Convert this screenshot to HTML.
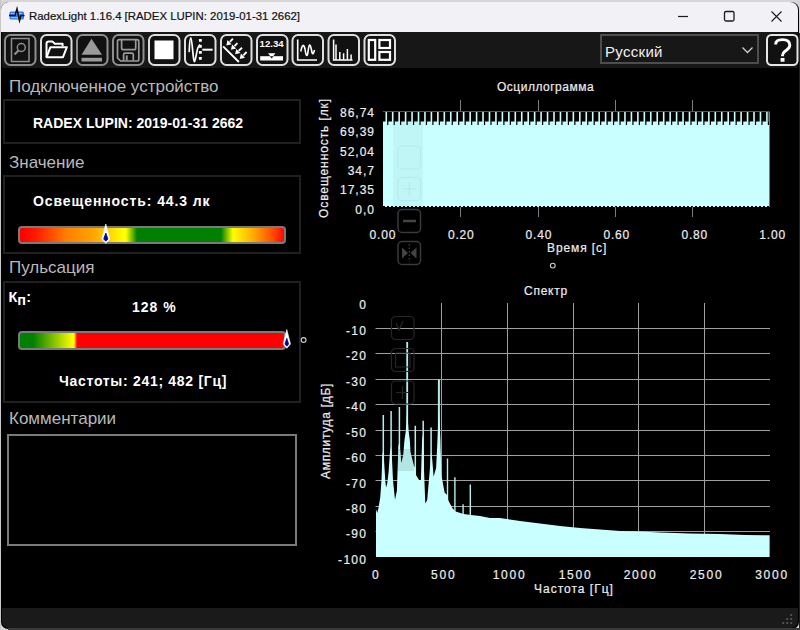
<!DOCTYPE html>
<html><head><meta charset="utf-8">
<style>
html,body{margin:0;padding:0;}
body{width:800px;height:630px;position:relative;overflow:hidden;background:#d6d6d6;font-family:"Liberation Sans",sans-serif;}
.a{position:absolute;}
#win{position:absolute;left:1px;top:2px;width:798px;height:627px;background:#000;border-radius:8px 8px 7px 7px;overflow:hidden;}
#title{position:absolute;left:1px;top:2px;width:797px;height:30px;background:#f1f1f6;border-radius:8px 8px 0 0;}
#tb{position:absolute;left:2px;top:32px;width:796px;height:36px;background:#171717;}
#status{position:absolute;left:2px;top:608px;width:796px;height:20px;background:#1a1a1a;border-radius:0 0 7px 7px;}
.t{position:absolute;white-space:nowrap;line-height:1;}
.hdr{color:#b9b9b9;font-size:17px;}
.box{position:absolute;border:2px solid #202020;box-sizing:border-box;}
.bold{font-weight:bold;color:#fff;font-size:14px;}
.ch{color:#ececec;font-size:12px;-webkit-text-stroke:0.2px #ececec;}
svg{position:absolute;left:0;top:0;}
</style></head><body>
<div class="a" style="left:0;top:0;width:800px;height:2px;background:#d6d6d6;"></div>
<div class="a" style="left:0;top:0;width:1px;height:630px;background:#c8c8c8;"></div>
<div id="win"></div>
<div id="title"></div>
<div id="tb"></div>
<div id="status"></div>
<div class="a" style="left:799px;top:33px;width:1px;height:597px;background:#222;"></div>
<div class="a" style="left:8px;top:628px;width:792px;height:2px;background:#3a3a3a;"></div>

<svg width="800" height="630" style="left:0;top:0"><g fill="#4e4e4e"><rect x="790.2" y="614" width="2" height="2"/><rect x="786.2" y="618" width="2" height="2"/><rect x="790.2" y="618" width="2" height="2"/><rect x="782.1" y="622" width="2" height="2"/><rect x="786.2" y="622" width="2" height="2"/><rect x="790.2" y="622" width="2" height="2"/></g></svg>
<!-- title bar -->
<div class="t" style="left:29px;top:11px;font-size:11.4px;color:#111;-webkit-text-stroke:0.2px #111;">RadexLight 1.16.4 [RADEX LUPIN: 2019-01-31 2662]</div>
<svg width="800" height="70" style="left:0;top:0">
  <rect x="9.5" y="11.5" width="14.5" height="8" rx="1.5" fill="#2f7df6"/>
  <rect x="11" y="13" width="11" height="1.2" fill="#8fc0ff"/>
  <rect x="11" y="17" width="11" height="1.2" fill="#8fc0ff"/>
  <path d="M9 15.5 H15 L17 9 L19.5 20.5 L21 15.5 H24.5" fill="none" stroke="#111" stroke-width="1.6"/>
  <!-- caption buttons -->
  <path d="M678 16.5 H688" stroke="#1c1c1c" stroke-width="1.2"/>
  <rect x="724.5" y="11.5" width="9.5" height="9.5" rx="1.5" fill="none" stroke="#1c1c1c" stroke-width="1.3"/>
  <path d="M771.5 11.5 L781.5 21.5 M781.5 11.5 L771.5 21.5" stroke="#1c1c1c" stroke-width="1.1"/>
</svg>

<!-- toolbar icons -->
<svg width="400" height="70" style="left:0;top:0" fill="none">
  <g stroke-width="2">
    <rect x="5" y="35" width="30.5" height="30" rx="5.5" stroke="#8e8e8e" fill="#111"/>
    <rect x="41" y="35" width="30.5" height="30" rx="5.5" stroke="#dedede" fill="#111"/>
    <rect x="77" y="35" width="30.5" height="30" rx="5.5" stroke="#8e8e8e" fill="#111"/>
    <rect x="113" y="35" width="30.5" height="30" rx="5.5" stroke="#8e8e8e" fill="#111"/>
    <rect x="149" y="35" width="30.5" height="30" rx="5.5" stroke="#dedede" fill="#111"/>
    <rect x="185" y="35" width="30.5" height="30" rx="5.5" stroke="#dedede" fill="#111"/>
    <rect x="221" y="35" width="30.5" height="30" rx="5.5" stroke="#dedede" fill="#111"/>
    <rect x="257" y="35" width="30.5" height="30" rx="5.5" stroke="#dedede" fill="#111"/>
    <rect x="292.5" y="35" width="30.5" height="30" rx="5.5" stroke="#dedede" fill="#111"/>
    <rect x="328.5" y="35" width="30.5" height="30" rx="5.5" stroke="#dedede" fill="#111"/>
    <rect x="364.5" y="35" width="30.5" height="30" rx="5.5" stroke="#dedede" fill="#111"/>
  </g>
  <!-- 1 search doc -->
  <g stroke="#8e8e8e" stroke-width="1.5">
    <rect x="11.5" y="38.5" width="17.5" height="23"/>
    <circle cx="21.3" cy="47.5" r="4"/>
    <path d="M18.5 50.5 L14.5 54.5" stroke-width="2.2"/>
  </g>
  <!-- 2 folder -->
  <path d="M46.5 57 V43.8 Q46.5 41.6 48.8 41.6 H52.6 L54.8 43.8 H62.6 V46.2" stroke="#fff" stroke-width="2" stroke-linejoin="round"/>
  <path d="M46.6 57.2 L50.4 47.2 H66.9 L63 57.2 Z" stroke="#fff" stroke-width="2" stroke-linejoin="round"/>
  <!-- 3 eject -->
  <path d="M91.5 38.7 L102 54.8 H81.5 Z" fill="#9a9a9a"/>
  <rect x="81.5" y="57.8" width="20.5" height="3.7" fill="#9a9a9a"/>
  <!-- 4 floppy -->
  <g stroke="#9a9a9a" stroke-width="1.7">
    <path d="M119.3 39.6 H136.9 Q138.8 39.6 138.8 41.5 V59.2 Q138.8 61 137 61 H120.6 L117.5 57.9 V41.5 Q117.5 39.6 119.3 39.6 Z"/>
    <path d="M121.6 39.6 V48 Q121.6 49.7 123.2 49.7 H134.1 Q135.7 49.7 135.7 48 V39.6"/>
    <path d="M123.6 61 V54.6 Q123.6 53.2 125 53.2 H131.8 Q133.3 53.2 133.3 54.6 V61"/>
  </g>
  <rect x="125.8" y="55.4" width="1.9" height="5" fill="#9a9a9a"/>
  <!-- 5 stop -->
  <rect x="154.5" y="40.5" width="19" height="18.7" fill="#fff"/>
  <!-- 6 wave dots -->
  <path d="M189.2 51.5 C189.6 41 190 37.8 190.8 37.8 C192.2 38 193 61.8 194.5 61.6 C195.8 61.3 196.6 46.5 199.6 45" stroke="#fff" stroke-width="1.7" stroke-linecap="round"/>
  <g fill="#fff"><rect x="198.9" y="38.9" width="2.9" height="2.9" rx="0.5"/><rect x="198.9" y="44.9" width="2.9" height="2.9" rx="0.5"/><rect x="198.9" y="50.9" width="2.9" height="2.9" rx="0.5"/><rect x="198.9" y="56.9" width="2.9" height="2.9" rx="0.5"/></g>
  <path d="M202.3 49.7 H212.6" stroke="#fff" stroke-width="2"/>
  <!-- 7 lux -->
  <g stroke="#fff" stroke-width="1.9">
    <path d="M223.1 46.3 L238.9 62"/>
    <path d="M232.9 38.6 L229.9 41.8 M237.4 43.1 L234.5 46.1 M242.0 47.7 L238.7 50.7 M246.6 52.0 L243.3 55.3"/>
  </g>
  <path d="M226.3 45.4 L231.6 44.2 L227.5 40.1 Z M230.9 49.7 L236.2 48.5 L232.1 44.4 Z M235.1 54.3 L240.4 53.1 L236.3 49.0 Z M239.7 58.9 L245.0 57.7 L240.9 53.6 Z" fill="#fff"/>
  <!-- 8 12.34 -->
  <text x="271.6" y="47" fill="#fff" font-size="9.6" font-weight="bold" text-anchor="middle" font-family="Liberation Sans">12.34</text>
  <rect x="260.2" y="56.2" width="22.8" height="4.3" fill="#fff"/>
  <path d="M268 53.3 H275.5 L271.7 58 Z" fill="#fff"/>
  <path d="M269.8 56.2 H273.6 L271.7 58.6 Z" fill="#111"/>
  <!-- 9 wave chart -->
  <path d="M297.7 39.5 V60 H317" stroke="#fff" stroke-width="1.6"/>
  <path d="M300.8 51.5 C302 45 303.5 43 305 49 C306 56 307 58 308 52 C309 43 310 43 311.5 50 C312.5 56 313.5 54 314.5 50" stroke="#fff" stroke-width="1.6"/>
  <!-- 10 spectrum bars -->
  <g stroke="#fff" stroke-width="1.5">
    <path d="M333.6 39.5 V60 H352.5"/>
    <path d="M336 44.6 V60 M339.8 51.9 V60 M343.6 53.3 V60 M347.4 49 V60 M351.1 54.6 V60"/>
  </g>
  <!-- 11 layout -->
  <g stroke="#fff" stroke-width="2.2">
    <rect x="368.8" y="40" width="6.4" height="19.8"/>
    <rect x="379.4" y="40" width="10.6" height="8"/>
    <rect x="379.4" y="52" width="10.6" height="7.8"/>
  </g>
</svg>

<!-- language dropdown -->
<div class="a" style="left:600px;top:34px;width:159px;height:30px;background:#171717;border:2px solid #4d4d4d;box-sizing:border-box;"></div>
<div class="t" style="left:605px;top:44px;font-size:15px;letter-spacing:0.3px;color:#f0f0f0;">Русский</div>
<svg width="800" height="70" style="left:0;top:0" fill="none">
  <path d="M742.5 47.5 L747.5 52.5 L752.5 47.5" stroke="#cfcfcf" stroke-width="1.3"/>
  <rect x="767" y="35" width="30.5" height="30" rx="4.5" stroke="#e6e6e6" stroke-width="2" fill="#111"/>
  <path d="M775.6 44.5 C775.6 40.8 778.5 39.6 782.5 39.6 C786.8 39.6 789.8 41.6 789.8 45.3 C789.8 48.6 787.2 49.8 785 51.3 C783.3 52.5 782.5 53.5 782.5 55.5 V56.2" stroke="#fff" stroke-width="2.9"/>
  <rect x="780.6" y="58" width="3.9" height="3.7" fill="#fff"/>
</svg>

<!-- left panel -->
<div class="t hdr" style="left:9px;top:78px;">Подключенное устройство</div>
<div class="box" style="left:3px;top:99px;width:298px;height:45px;"></div>
<div class="t bold" style="left:33px;top:116px;">RADEX LUPIN: 2019-01-31 2662</div>

<div class="t hdr" style="left:9px;top:154px;">Значение</div>
<div class="box" style="left:3px;top:175px;width:298px;height:79px;"></div>
<div class="t bold" style="left:33px;top:193.5px;letter-spacing:0.9px;">Освещенность: 44.3 лк</div>

<div class="t hdr" style="left:9px;top:259px;">Пульсация</div>
<div class="box" style="left:3px;top:281px;width:298px;height:122px;"></div>
<div class="t bold" style="left:8.5px;top:290px;font-size:14.5px;">К<span style="position:relative;top:3px;">п</span>:</div>
<div class="t bold" style="left:132px;top:299.5px;letter-spacing:1px;">128 %</div>
<div class="t bold" style="left:59px;top:374px;letter-spacing:0.7px;">Частоты: 241; 482 [Гц]</div>

<div class="t hdr" style="left:9px;top:410px;">Комментарии</div>
<div class="a" style="left:7px;top:434px;width:289.5px;height:112px;border:2px solid #7a7a7a;box-sizing:border-box;"></div>

<!-- bars -->
<div class="a" style="left:18px;top:225.5px;width:268px;height:18px;border:2px solid #7a7a7a;border-radius:4px;box-sizing:border-box;background:linear-gradient(90deg,#ff0000 2px,#ff1c00 16px,#ff8000 47px,#ffa000 71px,#ffc800 86px,#ffff00 103px,#ffff00 106px,#008000 117px,#008000 201px,#ffff00 213px,#ffb000 232px,#ff5000 252px,#ff0000 265px);"></div>
<div class="a" style="left:18px;top:331px;width:268px;height:18.5px;border:2px solid #7a7a7a;border-radius:4px;box-sizing:border-box;background:linear-gradient(90deg,#008000 13px,#ffff00 53px,#ffff00 54px,#ff0000 57px,#ff0000 100%);"></div>
<svg width="320" height="360" style="left:0;top:0">
  <path d="M105.8 224 L109.8 239 L105.8 243.3 L101.8 239 Z" fill="#fff" stroke="#fff" stroke-width="0.6" stroke-linejoin="round"/>
  <path d="M105.8 233 L107.9 239 L105.8 241.2 L103.7 239 Z" fill="#000090" stroke="#000090" stroke-width="0.8" stroke-linejoin="round"/>
  <path d="M286.8 329.5 L290.5 344 L286.8 348.3 L283.1 344 Z" fill="#fff" stroke="#fff" stroke-width="0.6" stroke-linejoin="round"/>
  <path d="M286.8 338.3 L288.6 344 L286.8 346.2 L285 344 Z" fill="#000090" stroke="#000090" stroke-width="0.8" stroke-linejoin="round"/>
  <circle cx="303.6" cy="340" r="2.4" fill="none" stroke="#cfcfcf" stroke-width="1.1"/>
</svg>

<!-- CHARTS -->
<svg width="800" height="630" style="left:0;top:0" fill="none">
  <path d="M460.5 100V217 M538.5 100V217 M615.5 100V217 M692.5 100V217" stroke="#7d7d7d" stroke-width="1"/>
  <rect x="383" y="112" width="386.5" height="95" fill="#c9ffff"/>
  <path d="M383 112h2.5v9.5h-2.5z M387.05 112h4.85v9.5h-4.85z M387.15 121.5h1.2v3.5h-1.2z M393.50 112h4.85v9.5h-4.85z M393.60 121.5h1.2v3.5h-1.2z M399.95 112h4.85v9.5h-4.85z M400.05 121.5h1.2v3.5h-1.2z M406.41 112h4.85v9.5h-4.85z M406.51 121.5h1.2v3.5h-1.2z M412.86 112h4.85v9.5h-4.85z M412.96 121.5h1.2v3.5h-1.2z M419.31 112h4.85v9.5h-4.85z M419.41 121.5h1.2v3.5h-1.2z M425.76 112h4.85v9.5h-4.85z M425.86 121.5h1.2v3.5h-1.2z M432.21 112h4.85v9.5h-4.85z M432.31 121.5h1.2v3.5h-1.2z M438.67 112h4.85v9.5h-4.85z M438.77 121.5h1.2v3.5h-1.2z M445.12 112h4.85v9.5h-4.85z M445.22 121.5h1.2v3.5h-1.2z M451.57 112h4.85v9.5h-4.85z M451.67 121.5h1.2v3.5h-1.2z M458.02 112h4.85v9.5h-4.85z M458.12 121.5h1.2v3.5h-1.2z M464.47 112h4.85v9.5h-4.85z M464.57 121.5h1.2v3.5h-1.2z M470.93 112h4.85v9.5h-4.85z M471.03 121.5h1.2v3.5h-1.2z M477.38 112h4.85v9.5h-4.85z M477.48 121.5h1.2v3.5h-1.2z M483.83 112h4.85v9.5h-4.85z M483.93 121.5h1.2v3.5h-1.2z M490.28 112h4.85v9.5h-4.85z M490.38 121.5h1.2v3.5h-1.2z M496.73 112h4.85v9.5h-4.85z M496.83 121.5h1.2v3.5h-1.2z M503.19 112h4.85v9.5h-4.85z M503.29 121.5h1.2v3.5h-1.2z M509.64 112h4.85v9.5h-4.85z M509.74 121.5h1.2v3.5h-1.2z M516.09 112h4.85v9.5h-4.85z M516.19 121.5h1.2v3.5h-1.2z M522.54 112h4.85v9.5h-4.85z M522.64 121.5h1.2v3.5h-1.2z M528.99 112h4.85v9.5h-4.85z M529.09 121.5h1.2v3.5h-1.2z M535.45 112h4.85v9.5h-4.85z M535.55 121.5h1.2v3.5h-1.2z M541.90 112h4.85v9.5h-4.85z M542.00 121.5h1.2v3.5h-1.2z M548.35 112h4.85v9.5h-4.85z M548.45 121.5h1.2v3.5h-1.2z M554.80 112h4.85v9.5h-4.85z M554.90 121.5h1.2v3.5h-1.2z M561.25 112h4.85v9.5h-4.85z M561.35 121.5h1.2v3.5h-1.2z M567.71 112h4.85v9.5h-4.85z M567.81 121.5h1.2v3.5h-1.2z M574.16 112h4.85v9.5h-4.85z M574.26 121.5h1.2v3.5h-1.2z M580.61 112h4.85v9.5h-4.85z M580.71 121.5h1.2v3.5h-1.2z M587.06 112h4.85v9.5h-4.85z M587.16 121.5h1.2v3.5h-1.2z M593.51 112h4.85v9.5h-4.85z M593.61 121.5h1.2v3.5h-1.2z M599.97 112h4.85v9.5h-4.85z M600.07 121.5h1.2v3.5h-1.2z M606.42 112h4.85v9.5h-4.85z M606.52 121.5h1.2v3.5h-1.2z M612.87 112h4.85v9.5h-4.85z M612.97 121.5h1.2v3.5h-1.2z M619.32 112h4.85v9.5h-4.85z M619.42 121.5h1.2v3.5h-1.2z M625.77 112h4.85v9.5h-4.85z M625.87 121.5h1.2v3.5h-1.2z M632.23 112h4.85v9.5h-4.85z M632.33 121.5h1.2v3.5h-1.2z M638.68 112h4.85v9.5h-4.85z M638.78 121.5h1.2v3.5h-1.2z M645.13 112h4.85v9.5h-4.85z M645.23 121.5h1.2v3.5h-1.2z M651.58 112h4.85v9.5h-4.85z M651.68 121.5h1.2v3.5h-1.2z M658.03 112h4.85v9.5h-4.85z M658.13 121.5h1.2v3.5h-1.2z M664.49 112h4.85v9.5h-4.85z M664.59 121.5h1.2v3.5h-1.2z M670.94 112h4.85v9.5h-4.85z M671.04 121.5h1.2v3.5h-1.2z M677.39 112h4.85v9.5h-4.85z M677.49 121.5h1.2v3.5h-1.2z M683.84 112h4.85v9.5h-4.85z M683.94 121.5h1.2v3.5h-1.2z M690.29 112h4.85v9.5h-4.85z M690.39 121.5h1.2v3.5h-1.2z M696.75 112h4.85v9.5h-4.85z M696.85 121.5h1.2v3.5h-1.2z M703.20 112h4.85v9.5h-4.85z M703.30 121.5h1.2v3.5h-1.2z M709.65 112h4.85v9.5h-4.85z M709.75 121.5h1.2v3.5h-1.2z M716.10 112h4.85v9.5h-4.85z M716.20 121.5h1.2v3.5h-1.2z M722.55 112h4.85v9.5h-4.85z M722.65 121.5h1.2v3.5h-1.2z M729.01 112h4.85v9.5h-4.85z M729.11 121.5h1.2v3.5h-1.2z M735.46 112h4.85v9.5h-4.85z M735.56 121.5h1.2v3.5h-1.2z M741.91 112h4.85v9.5h-4.85z M742.01 121.5h1.2v3.5h-1.2z M748.36 112h4.85v9.5h-4.85z M748.46 121.5h1.2v3.5h-1.2z M754.81 112h4.85v9.5h-4.85z M754.91 121.5h1.2v3.5h-1.2z M761.27 112h4.85v9.5h-4.85z M761.37 121.5h1.2v3.5h-1.2z M767.72 112h0.98v9.5h-0.98z M767.82 121.5h1.2v3.5h-1.2z" fill="#000"/>
  <path d="M383 111.5H769.5" stroke="#555" stroke-width="1"/>
  <path d="M383 206.5H769.5" stroke="#000" stroke-width="1" stroke-dasharray="2 2"/>
  <rect x="393" y="122" width="30" height="85" fill="#5a7a7a" fill-opacity="0.07"/>
  <path d="M375.5 328.5H770 M375.5 353.5H770 M375.5 379.5H770 M375.5 404.5H770 M375.5 430.5H770 M375.5 455.5H770 M375.5 480.5H770 M375.5 506.5H770 M375.5 531.5H770 M441.5 303V557 M507.5 303V557 M573.5 303V557 M638.5 303V557 M704.5 303V557" stroke="#a0a0a0" stroke-width="1"/>
  <path d="M382.55 415.0h1.50V540h-1.50z M390.35 411.0h1.50V540h-1.50z M398.65 407.0h1.50V540h-1.50z M406.30 342.0h1.80V540h-1.80z M414.55 425.7h1.50V540h-1.50z M422.45 420.8h1.50V540h-1.50z M430.35 427.6h1.50V540h-1.50z M437.90 379.5h2.00V540h-2.00z M446.80 458.6h1.40V540h-1.40z M454.20 477.3h1.40V540h-1.40z M462.40 504.3h1.40V540h-1.40z M469.60 484.4h1.40V540h-1.40z" fill="#b4eeee"/>
  <path d="M376 557 L376.0 509.0 L377.2 513.0 L378.4 508.6 L380.3 497.0 L381.6 478.0 L382.3 455.0 L383.3 450.0 L384.3 465.0 L385.4 482.0 L386.1 487.6 L387.3 483.0 L388.6 472.0 L389.9 453.0 L391.1 446.0 L391.8 455.0 L393.0 480.6 L395.0 499.7 L396.9 490.8 L397.5 471.7 L398.4 446.0 L399.4 442.0 L400.7 455.0 L401.3 463.0 L403.2 455.0 L404.5 440.0 L405.8 431.0 L406.5 421.0 L407.2 405.0 L407.9 421.0 L408.6 431.0 L409.8 440.0 L410.5 452.0 L413.9 465.4 L415.2 468.0 L416.0 475.0 L419.0 480.0 L420.9 480.0 L422.1 440.0 L423.2 433.0 L424.0 470.0 L425.3 503.5 L427.2 500.0 L429.8 470.0 L431.1 452.0 L432.3 460.0 L433.6 476.8 L436.1 468.0 L437.5 440.0 L438.2 422.0 L438.9 408.0 L439.6 422.0 L440.4 440.0 L441.4 474.9 L444.6 492.4 L447.0 495.0 L447.5 494.0 L448.2 500.3 L452.5 508.3 L455.5 511.4 L460.5 513.0 L463.6 514.0 L470.9 515.0 L480.0 516.0 L490.0 518.0 L500.0 518.0 L520.0 521.0 L540.0 523.6 L560.0 526.0 L580.0 528.0 L600.0 529.6 L620.0 531.0 L640.0 531.6 L660.0 532.4 L690.0 533.6 L720.0 534.0 L745.0 535.0 L769.6 535.2 L769.6 557 Z" fill="#c9ffff"/>
  <rect x="397" y="449" width="17" height="22" fill="#000" fill-opacity="0.1"/>
  <g stroke="#262626" stroke-width="1.2">
    <rect x="391.5" y="316.5" width="22.5" height="23" rx="4"/>
    <rect x="391.5" y="348.5" width="22.5" height="23" rx="4"/>
    <rect x="391.5" y="381" width="22.5" height="23" rx="4"/>
    <path d="M396 323 L399 330 L403 321 M396 392.5 H409 M402.5 386 V399 M395.5 353 V367 H410 V353 Z"/>
  </g>
  <g stroke="#8ab" stroke-opacity="0.15" stroke-width="1.2">
    <rect x="398" y="146" width="22.5" height="23" rx="4"/>
    <rect x="398" y="177.5" width="22.5" height="23" rx="4"/>
    <path d="M403 189 H416 M409.5 182 V196"/>
  </g>
  <g stroke="#3a3a3a" stroke-width="1.5">
    <rect x="398" y="209.5" width="22.5" height="23" rx="4"/>
    <rect x="398" y="241.5" width="22.5" height="23" rx="4"/>
  </g>
  <path d="M403 221 H416" stroke="#444" stroke-width="2.5"/>
  <path d="M402 247.5 L408 253 L402 258.5 Z M416.5 247.5 L410.5 253 L416.5 258.5 Z" fill="#444"/>
  <path d="M409.3 244 V262" stroke="#444" stroke-width="1.2" stroke-dasharray="1.5 2"/>
</svg>
<div class="t ch" style="left:497.0px;top:81.0px;font-size:12px;letter-spacing:0.5px;">Осциллограмма</div>
<div class="t ch" style="right:425.0px;top:107.0px;font-size:12px;letter-spacing:1.0px;">86,74</div>
<div class="t ch" style="right:425.0px;top:126.3px;font-size:12px;letter-spacing:1.0px;">69,39</div>
<div class="t ch" style="right:425.0px;top:145.6px;font-size:12px;letter-spacing:1.0px;">52,04</div>
<div class="t ch" style="right:425.0px;top:164.9px;font-size:12px;letter-spacing:1.0px;">34,7</div>
<div class="t ch" style="right:425.0px;top:184.2px;font-size:12px;letter-spacing:1.0px;">17,35</div>
<div class="t ch" style="right:425.0px;top:203.5px;font-size:12px;letter-spacing:1.0px;">0,0</div>
<div class="t ch" style="left:322.9px;width:120px;text-align:center;top:229.0px;font-size:12px;letter-spacing:0.8px;">0.00</div>
<div class="t ch" style="left:401.2px;width:120px;text-align:center;top:229.0px;font-size:12px;letter-spacing:0.8px;">0.20</div>
<div class="t ch" style="left:478.9px;width:120px;text-align:center;top:229.0px;font-size:12px;letter-spacing:0.8px;">0.40</div>
<div class="t ch" style="left:556.7px;width:120px;text-align:center;top:229.0px;font-size:12px;letter-spacing:0.8px;">0.60</div>
<div class="t ch" style="left:634.7px;width:120px;text-align:center;top:229.0px;font-size:12px;letter-spacing:0.8px;">0.80</div>
<div class="t ch" style="left:712.6px;width:120px;text-align:center;top:229.0px;font-size:12px;letter-spacing:0.8px;">1.00</div>
<div class="t ch" style="left:547.0px;top:242.0px;font-size:12px;letter-spacing:0.9px;">Время [с]</div>
<div class="t ch" style="left:324px;top:158px;letter-spacing:0.9px;transform:translate(-50%,-50%) rotate(-90deg);">Освещенность [лк]</div>
<div class="t ch" style="left:524.0px;top:285.0px;font-size:12px;letter-spacing:0.75px;">Спектр</div>
<div class="t ch" style="right:432.7px;top:299.3px;font-size:12px;letter-spacing:1.3px;">0</div>
<div class="t ch" style="right:432.7px;top:324.8px;font-size:12px;letter-spacing:1.3px;">-10</div>
<div class="t ch" style="right:432.7px;top:350.2px;font-size:12px;letter-spacing:1.3px;">-20</div>
<div class="t ch" style="right:432.7px;top:375.7px;font-size:12px;letter-spacing:1.3px;">-30</div>
<div class="t ch" style="right:432.7px;top:401.1px;font-size:12px;letter-spacing:1.3px;">-40</div>
<div class="t ch" style="right:432.7px;top:426.6px;font-size:12px;letter-spacing:1.3px;">-50</div>
<div class="t ch" style="right:432.7px;top:452.1px;font-size:12px;letter-spacing:1.3px;">-60</div>
<div class="t ch" style="right:432.7px;top:477.5px;font-size:12px;letter-spacing:1.3px;">-70</div>
<div class="t ch" style="right:432.7px;top:503.0px;font-size:12px;letter-spacing:1.3px;">-80</div>
<div class="t ch" style="right:432.7px;top:528.4px;font-size:12px;letter-spacing:1.3px;">-90</div>
<div class="t ch" style="right:432.7px;top:553.9px;font-size:12px;letter-spacing:1.3px;">-100</div>
<div class="t ch" style="left:316.3px;width:120px;text-align:center;top:569.0px;font-size:12px;letter-spacing:1.8px;">0</div>
<div class="t ch" style="left:383.8px;width:120px;text-align:center;top:569.0px;font-size:12px;letter-spacing:1.8px;">500</div>
<div class="t ch" style="left:449.6px;width:120px;text-align:center;top:569.0px;font-size:12px;letter-spacing:1.8px;">1000</div>
<div class="t ch" style="left:515.6px;width:120px;text-align:center;top:569.0px;font-size:12px;letter-spacing:1.8px;">1500</div>
<div class="t ch" style="left:580.6px;width:120px;text-align:center;top:569.0px;font-size:12px;letter-spacing:1.8px;">2000</div>
<div class="t ch" style="left:646.6px;width:120px;text-align:center;top:569.0px;font-size:12px;letter-spacing:1.8px;">2500</div>
<div class="t ch" style="left:712.1px;width:120px;text-align:center;top:569.0px;font-size:12px;letter-spacing:1.8px;">3000</div>
<div class="t ch" style="left:534.0px;top:583.0px;font-size:12px;letter-spacing:1.0px;">Частота [Гц]</div>
<div class="t ch" style="left:326px;top:431px;letter-spacing:0.7px;transform:translate(-50%,-50%) rotate(-90deg);">Амплитуда [дБ]</div>
<svg width="800" height="630" style="left:0;top:0" fill="none"><circle cx="552.8" cy="265.6" r="2.4" stroke="#d0d0d0" stroke-width="1.1"/></svg>
<!-- /CHARTS -->
</body></html>
